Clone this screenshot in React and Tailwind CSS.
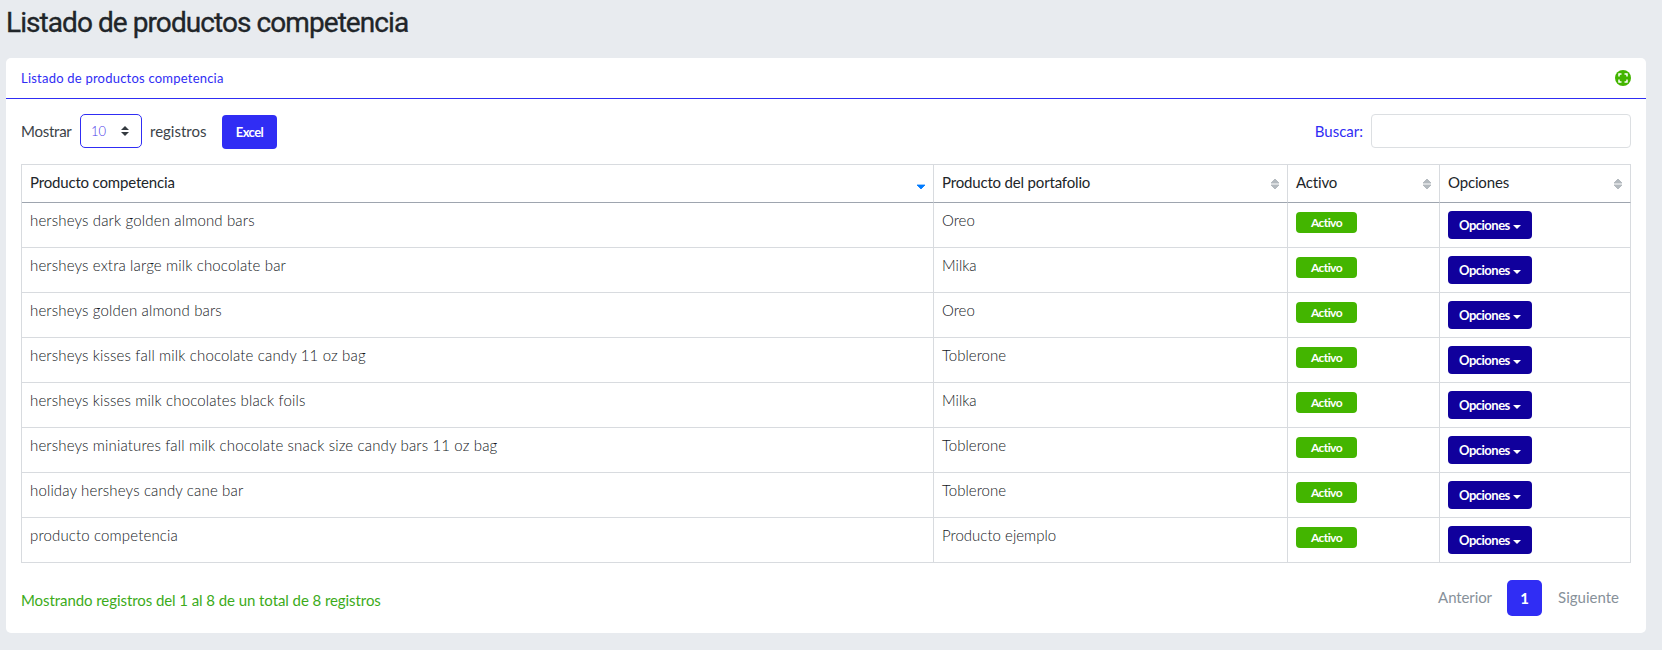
import React from 'react';

const rows = [
  ['hersheys dark golden almond bars', 'Oreo'],
  ['hersheys extra large milk chocolate bar', 'Milka'],
  ['hersheys golden almond bars', 'Oreo'],
  ['hersheys kisses fall milk chocolate candy 11 oz bag', 'Toblerone'],
  ['hersheys kisses milk chocolates black foils', 'Milka'],
  ['hersheys miniatures fall milk chocolate snack size candy bars 11 oz bag', 'Toblerone'],
  ['holiday hersheys candy cane bar', 'Toblerone'],
  ['producto competencia', 'Producto ejemplo'],
];

function SortIcon({ active }) {
  return (
    <svg width="10" height="12" viewBox="0 0 10 12" className="shrink-0">
      {active ? (
        <path d="M1 7h8L5 11z" fill="#007bff" stroke="#007bff" strokeWidth="0.8" strokeLinejoin="round" />
      ) : (
        <g fill="#b4babf" stroke="#b4babf" strokeWidth="1" strokeLinejoin="round">
          <path d="M1 5h8L5 1z" />
          <path d="M1 7h8L5 11z" />
        </g>
      )}
    </svg>
  );
}

function HeaderCell({ children, active, className }) {
  return (
    <th className={`h-[38px] border-b border-b-[#9ea5af] border-r border-r-[#d8dbdf] p-0 text-left font-normal ${className}`}>
      <div className="flex items-center justify-between pl-2 pr-[7px]">
        <span className="pb-[3px]">{children}</span>
        <SortIcon active={active} />
      </div>
    </th>
  );
}

function ExpandIcon() {
  return (
    <svg width="16" height="16" viewBox="0 0 16 16">
      <circle cx="8" cy="8" r="8" fill="#43b500" />
      <path d="M4 6.5V4H6.5M9.5 4H12v2.5M12 9.5V12H9.5M6.5 12H4V9.5" fill="none" stroke="#fff" strokeWidth="1.5" />
    </svg>
  );
}

export default function App() {
  return (
    <div className="h-[650px] overflow-hidden bg-[#e8ebef] pl-1.5 pr-4 font-['Lato',sans-serif] text-[15px] leading-[22px]">
      <h1 className="flex h-[58px] items-start pt-1.5 font-['Roboto',sans-serif] text-[28px] font-normal leading-[34px] tracking-[-0.93px] text-[#212529] [-webkit-text-stroke:0.35px_#212529]">
        Listado de productos competencia
      </h1>

      <section className="flex h-[575px] flex-col rounded-[5px] bg-white">
        <header className="flex h-[41px] shrink-0 items-center justify-between border-b border-[#302df4] px-[15px]">
          <h2 className="text-[13px] tracking-[0.22px] text-[#302df4]">Listado de productos competencia</h2>
          <ExpandIcon />
        </header>

        <div className="flex items-start justify-between px-[15px] pt-[15px]">
          <div className="flex items-start text-[#3c4348]">
            <span className="w-[59px] pt-1.5 tracking-[-0.25px]">Mostrar</span>
            <div className="flex h-[34px] w-[62px] items-center justify-between rounded-[5px] border border-[#302df4] pl-2.5 pr-3 text-[13px] font-light text-[#4a38e8]">
              <span>10</span>
              <svg width="8" height="10" viewBox="0 0 8 10" fill="#343a40">
                <path d="M0 4h8L4 0zM0 6h8L4 10z" />
              </svg>
            </div>
            <span className="w-20 pl-2 pt-1.5">registros</span>
            <button className="mt-px h-[34px] w-[55px] rounded-[4px] bg-[#302df4] text-[13px] font-bold tracking-[-0.6px] text-white">Excel</button>
          </div>
          <label className="flex items-start gap-2 text-[#302df4]">
            <span className="pt-1.5">Buscar:</span>
            <input className="h-[34px] w-[260px] rounded-[4px] border border-[#dcdfe2] bg-white" />
          </label>
        </div>

        <div className="px-[15px] pt-[15px]">
          <table className="w-[1610px] table-fixed border-separate border-spacing-0 border-l border-t border-[#d8dbdf]">
            <thead className="tracking-[-0.17px] text-[#212529]">
              <tr>
                <HeaderCell active className="w-[912px]">Producto competencia</HeaderCell>
                <HeaderCell className="w-[354px]">Producto del portafolio</HeaderCell>
                <HeaderCell className="w-[152px]">Activo</HeaderCell>
                <HeaderCell className="w-[191px]">Opciones</HeaderCell>
              </tr>
            </thead>
            <tbody className="text-[#14181c]">
              {rows.map(([product, portfolio]) => (
                <tr key={product} className="h-[45px] align-top">
                  <td className="border-b border-r border-[#d8dbdf] px-2 pb-0 pt-1.5 font-light tracking-[0.15px]">{product}</td>
                  <td className="border-b border-r border-[#d8dbdf] px-2 pb-0 pt-1.5 font-light tracking-[0.02px]">{portfolio}</td>
                  <td className="border-b border-r border-[#d8dbdf] px-2 pb-0 pt-[9px]">
                    <span className="flex h-[21px] w-[61px] items-center justify-center rounded-[4px] bg-[#43b500] text-xs font-bold leading-none tracking-[-0.6px] text-white">
                      Activo
                    </span>
                  </td>
                  <td className="border-b border-r border-[#d8dbdf] px-2 pb-0 pt-2">
                    <button className="flex h-7 w-[84px] items-center gap-[3px] rounded-[4px] bg-[#10009c] pl-[11px] text-[13px] font-bold tracking-[-0.5px] text-white">
                      Opciones
                      <svg width="8" height="4" viewBox="0 0 8 4" fill="#fff" className="mt-[3px]">
                        <path d="M0 0h8L4 4z" />
                      </svg>
                    </button>
                  </td>
                </tr>
              ))}
            </tbody>
          </table>
        </div>

        <footer className="flex items-start justify-between pl-[15px] pr-[27px] pt-[17px]">
          <p className="pt-[9px] tracking-[-0.07px] text-[#3cab1a]">
            Mostrando registros del 1 al 8 de un total de 8 registros
          </p>
          <nav className="flex items-start text-[#87919a]">
            <span className="w-[69px] pt-1.5 tracking-[-0.1px]">Anterior</span>
            <span className="flex h-9 w-[35px] items-center justify-center rounded-[5px] bg-[#302df4] font-bold text-white">1</span>
            <span className="pl-4 pt-1.5">Siguiente</span>
          </nav>
        </footer>
      </section>
    </div>
  );
}
